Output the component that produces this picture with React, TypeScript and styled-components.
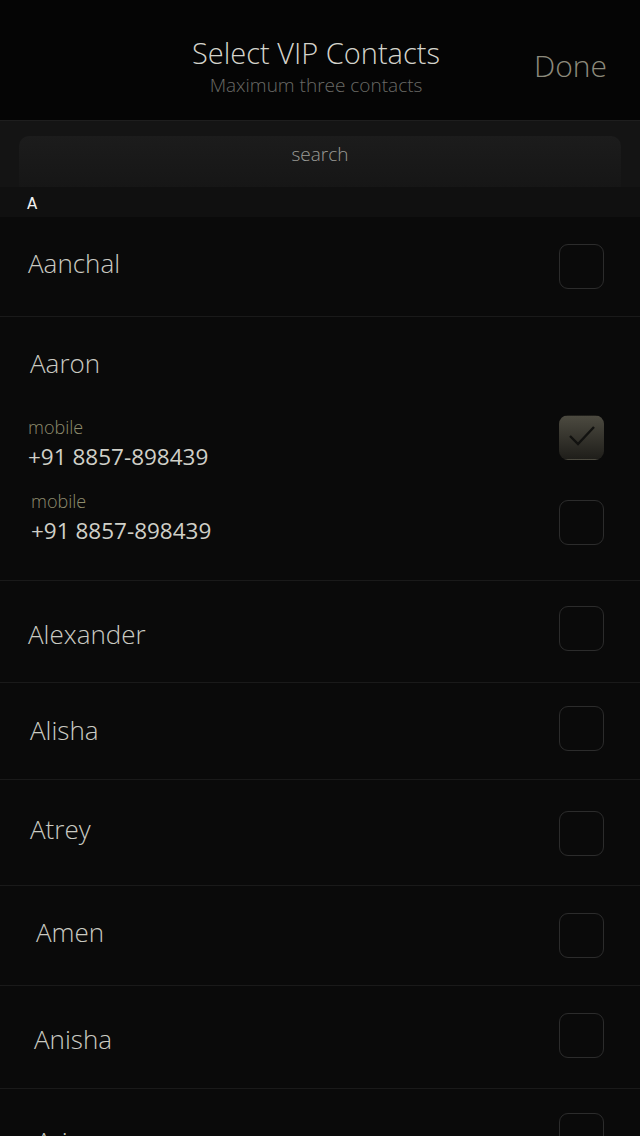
import React from "react";
import styled, { createGlobalStyle } from "styled-components";

const GlobalStyle = createGlobalStyle`
  html, body {
    margin: 0;
    padding: 0;
    background: #0a0a0a;
    font-family: "Open Sans", "Noto Sans", sans-serif;
    overflow: hidden;
  }
`;

const Screen = styled.div`
  width: 640px;
  height: 1136px;
  overflow: hidden;
  background: #0a0a0a;
  display: flex;
  flex-direction: column;
`;

const Header = styled.header`
  height: 120px;
  flex-shrink: 0;
  background: #050505;
  display: grid;
  grid-template-columns: 1fr auto 1fr;
  align-items: center;
`;

const TitleBlock = styled.div`
  display: flex;
  flex-direction: column;
  align-items: center;
  margin-right: 8px;
  margin-top: 14px;
`;

const Title = styled.h1`
  margin: 0;
  font-size: 29px;
  font-weight: 300;
  color: #d4d4cc;
  line-height: 36px;
`;

const Subtitle = styled.div`
  font-size: 19px;
  font-weight: 300;
  color: #6a6a66;
  line-height: 28px;
`;

const DoneButton = styled.div`
  justify-self: end;
  padding-right: 33px;
  font-size: 30px;
  font-weight: 300;
  color: #8c8a7c;
  margin-top: 10px;
`;

const SearchBar = styled.div`
  height: 67px;
  flex-shrink: 0;
  border-top: 1px solid #1e1e1e;
  background: #141414;
  padding: 15px 19px 0;
  box-sizing: border-box;
`;

const SearchField = styled.div`
  height: 52px;
  border-radius: 10px 10px 0 0;
  background: linear-gradient(#1c1c1c, #161616);
  display: flex;
  justify-content: center;
  padding-top: 5px;
  box-sizing: border-box;
  font-size: 19px;
  font-weight: 300;
  color: #9a9a96;
`;

const SectionHeader = styled.div`
  height: 30px;
  flex-shrink: 0;
  background: #101010;
  display: flex;
  align-items: center;
  padding: 4px 0 0 27px;
  box-sizing: border-box;
  font-size: 15px;
  color: #f0f0f0;
  font-family: "DejaVu Sans", sans-serif;
`;

const Row = styled.div<{ $h: number }>`
  height: ${(p) => p.$h}px;
  flex-shrink: 0;
  box-sizing: border-box;
  border-bottom: 1px solid #1a1a1a;
  display: flex;
  align-items: center;
  padding-right: 36px;
`;

const Name = styled.div<{ $x: number; $dy?: number }>`
  flex: 1;
  padding-left: ${(p) => p.$x}px;
  font-size: 26px;
  font-weight: 300;
  color: #cbcbc3;
  transform: translateY(${(p) => p.$dy || 0}px);
`;

const GroupRow = styled.div`
  height: 264px;
  flex-shrink: 0;
  box-sizing: border-box;
  border-bottom: 1px solid #1a1a1a;
  display: flex;
  flex-direction: column;
  padding-top: 28px;
`;

const GroupName = styled(Name)`
  flex: none;
  line-height: 36px;
  margin-bottom: 26px;
`;

const PhoneRow = styled.div<{ $x: number }>`
  display: flex;
  align-items: center;
  padding: 0 36px 0 ${(p) => p.$x}px;
  height: 74px;
`;

const PhoneInfo = styled.div`
  flex: 1;
  display: flex;
  flex-direction: column;
`;

const PhoneLabel = styled.div`
  font-size: 18px;
  font-weight: 300;
  color: #8f8d6e;
  line-height: 26px;
`;

const PhoneNumber = styled.div`
  font-size: 22.5px;
  color: #d0d0c8;
  line-height: 34px;
`;

const Box = styled.div<{ $checked?: boolean }>`
  width: 45px;
  height: 45px;
  flex-shrink: 0;
  box-sizing: border-box;
  border-radius: 9px;
  border: 1.5px solid ${(p) => (p.$checked ? "transparent" : "#2c2c2c")};
  background: ${(p) =>
    p.$checked ? "linear-gradient(#4c4a40, #1f1e1a)" : "transparent"};
  display: flex;
  align-items: center;
  justify-content: center;
`;

const CheckBox = ({ checked, dy = 0 }: { checked?: boolean; dy?: number }) => (
  <Box $checked={checked} style={{ transform: `translateY(${dy}px)` }}>
    {checked && (
      <svg width="32" height="32" viewBox="0 0 32 32">
        <path
          d="M4 15 L12 23 L28 6"
          fill="none"
          stroke="#121210"
          strokeWidth="2.4"
        />
      </svg>
    )}
  </Box>
);

const contacts = [
  { name: "Alexander", h: 102, x: 28, dy: 2, boxDy: -3 },
  { name: "Alisha", h: 97, x: 30, dy: -1, boxDy: -3 },
  { name: "Atrey", h: 106, x: 30, dy: -4, boxDy: 1 },
  { name: "Amen", h: 100, x: 36, dy: -4, boxDy: 0 },
  { name: "Anisha", h: 103, x: 34, dy: 2, boxDy: -2 },
];

const App = () => (
  <Screen>
    <GlobalStyle />
    <Header>
      <div />
      <TitleBlock>
        <Title>Select VIP Contacts</Title>
        <Subtitle>Maximum three contacts</Subtitle>
      </TitleBlock>
      <DoneButton>Done</DoneButton>
    </Header>
    <SearchBar>
      <SearchField>search</SearchField>
    </SearchBar>
    <SectionHeader>A</SectionHeader>
    <Row $h={100}>
      <Name $x={28} $dy={-4}>Aanchal</Name>
      <CheckBox />
    </Row>
    <GroupRow>
      <GroupName $x={30}>Aaron</GroupName>
      <PhoneRow $x={28}>
        <PhoneInfo>
          <PhoneLabel>mobile</PhoneLabel>
          <PhoneNumber>+91 8857-898439</PhoneNumber>
        </PhoneInfo>
        <CheckBox checked dy={-7} />
      </PhoneRow>
      <PhoneRow $x={31}>
        <PhoneInfo>
          <PhoneLabel>mobile</PhoneLabel>
          <PhoneNumber>+91 8857-898439</PhoneNumber>
        </PhoneInfo>
        <CheckBox dy={4} />
      </PhoneRow>
    </GroupRow>
    {contacts.map((c) => (
      <Row key={c.name} $h={c.h}>
        <Name $x={c.x} $dy={c.dy}>{c.name}</Name>
        <CheckBox dy={c.boxDy} />
      </Row>
    ))}
    <Row $h={104} style={{ alignItems: "flex-start", paddingTop: 24 }}>
      <Name $x={36} $dy={10}>Arjun</Name>
      <CheckBox />
    </Row>
  </Screen>
);

export default App;
